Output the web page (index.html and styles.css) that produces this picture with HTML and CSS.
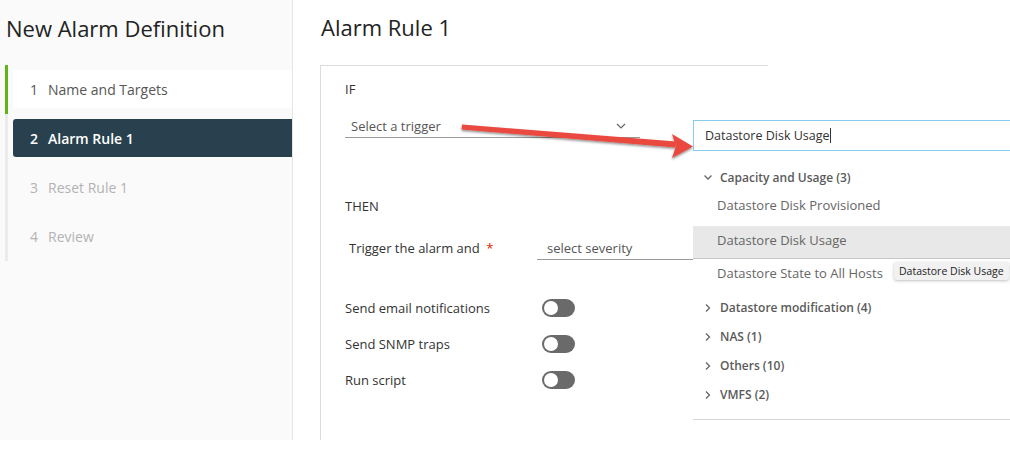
FILE: index.html
```html
<!DOCTYPE html>
<html lang="en">
<head>
    <meta charset="UTF-8">
    <title>New Alarm Definition</title>
    <link rel="stylesheet" href="styles.css">
</head>
<body>
    <div class="app">
        <div class="sidebar">
            <h1 class="wizard-title">New Alarm Definition</h1>
            <div class="steps">
                <div class="step-slot done">
                    <div class="step"><span class="num">1</span>Name and Targets</div>
                </div>
                <div class="step-slot">
                    <div class="step current"><span class="num">2</span>Alarm Rule 1</div>
                </div>
                <div class="step-slot">
                    <div class="step disabled"><span class="num">3</span>Reset Rule 1</div>
                </div>
                <div class="step-slot">
                    <div class="step disabled"><span class="num">4</span>Review</div>
                </div>
            </div>
        </div>
        <div class="main">
            <h2 class="page-title">Alarm Rule 1</h2>
            <div class="card">
                <div class="section-label">IF</div>
                <div class="select trigger-select">
                    <span>Select a trigger</span>
                    <svg class="caret" width="10" height="6" viewBox="0 0 10 6"><path d="M1 1l4 4 4-4" fill="none" stroke="#666" stroke-width="1.2"/></svg>
                </div>

                <div class="section-label then">THEN</div>
                <div class="severity-row">
                    <div class="severity-label">Trigger the alarm and <span class="req">*</span></div>
                    <div class="select severity-select"><span>select severity</span></div>
                </div>

                <div class="toggles">
                    <div class="toggle-row">
                        <span class="toggle-label">Send email notifications</span>
                        <span class="toggle"><span class="knob"></span></span>
                    </div>
                    <div class="toggle-row">
                        <span class="toggle-label">Send SNMP traps</span>
                        <span class="toggle"><span class="knob"></span></span>
                    </div>
                    <div class="toggle-row">
                        <span class="toggle-label">Run script</span>
                        <span class="toggle"><span class="knob"></span></span>
                    </div>
                </div>

                <div class="trigger-menu">
                    <div class="search">Datastore Disk Usage<span class="cursor"></span></div>
                    <div class="group open">
                        <svg class="chev" width="10" height="10" viewBox="0 0 10 10"><path d="M1.5 3.5l3.5 3.5 3.5-3.5" fill="none" stroke="#666" stroke-width="1.3"/></svg>
                        Capacity and Usage (3)
                    </div>
                    <div class="item">Datastore Disk Provisioned</div>
                    <div class="item active">Datastore Disk Usage</div>
                    <div class="item">Datastore State to All Hosts</div>
                    <div class="groups">
                        <div class="group">
                            <svg class="chev" width="10" height="10" viewBox="0 0 10 10"><path d="M3 1.5l3.5 3.5-3.5 3.5" fill="none" stroke="#666" stroke-width="1.3"/></svg>
                            Datastore modification (4)
                        </div>
                        <div class="group">
                            <svg class="chev" width="10" height="10" viewBox="0 0 10 10"><path d="M3 1.5l3.5 3.5-3.5 3.5" fill="none" stroke="#666" stroke-width="1.3"/></svg>
                            NAS (1)
                        </div>
                        <div class="group">
                            <svg class="chev" width="10" height="10" viewBox="0 0 10 10"><path d="M3 1.5l3.5 3.5-3.5 3.5" fill="none" stroke="#666" stroke-width="1.3"/></svg>
                            Others (10)
                        </div>
                        <div class="group">
                            <svg class="chev" width="10" height="10" viewBox="0 0 10 10"><path d="M3 1.5l3.5 3.5-3.5 3.5" fill="none" stroke="#666" stroke-width="1.3"/></svg>
                            VMFS (2)
                        </div>
                    </div>
                    <div class="tooltip">Datastore Disk Usage</div>
                </div>
            </div>
        </div>
    </div>

    <!-- annotation arrow drawn over the screenshot -->
    <svg class="callout" width="1010" height="460" viewBox="0 0 1010 460">
        <defs>
            <filter id="shadow" x="-10%" y="-50%" width="120%" height="200%">
                <feDropShadow dx="0" dy="1.5" stdDeviation="1.2" flood-color="#000" flood-opacity="0.45"/>
            </filter>
        </defs>
        <g filter="url(#shadow)" fill="#ea4a3f">
            <path d="M462 124.5 L676 141.5 L675.5 147.5 L461.5 129.5 Z"/>
            <path d="M672 134 L693 146.5 L672 158 L676 146 Z"/>
        </g>
    </svg>
</body>
</html>
```

FILE: styles.css
```css
* {
    box-sizing: border-box;
}
body {
    margin: 0;
    background: #fff;
    color: #333;
    font-family: 'Open Sans', 'Lato', sans-serif;
    position: relative;
}
.app {
    display: flex;
    height: 440px;
    width: 1010px;
}

/* wizard steps */
.sidebar {
    width: 293px;
    flex: none;
    background: #fafafa;
    border-right: 1px solid #e6e6e6;
}
.wizard-title {
    margin: 0;
    padding: 16px 0 0 6px;
    font-size: 22px;
    line-height: 24px;
    font-weight: 400;
    color: #222;
}
.steps {
    margin: 25px 0 0 5px;
}
.step-slot {
    border-left: 3px solid #ebebeb;
    padding: 5px 0 6px 5px;
}
.step-slot.done {
    border-left-color: #60b515;
}
.step {
    height: 38px;
    display: flex;
    align-items: center;
    padding-left: 17px;
    font-size: 14px;
    color: #565656;
    background: #fff;
}
.step .num {
    width: 18px;
}
.step.current {
    background: #29414e;
    color: #fff;
    font-weight: 600;
    border-radius: 3px 0 0 3px;
}
.step.disabled {
    background: none;
    color: #b3b3b3;
}

/* rule form */
.main {
    flex: 1;
    padding-left: 27px;
}
.page-title {
    margin: 0;
    padding: 15px 0 0 1px;
    font-size: 22px;
    line-height: 24px;
    font-weight: 400;
    color: #222;
}
.card {
    position: relative;
    margin-top: 26px;
    width: 448px;
    height: 375px;
    border-top: 1px solid #dcdcdc;
    border-left: 1px solid #dcdcdc;
    padding: 13px 0 0 24px;
    font-size: 13px;
}
.section-label {
    line-height: 20px;
}
.section-label.then {
    margin-top: 58px;
}
.select {
    display: flex;
    align-items: center;
    height: 24px;
    border-bottom: 1px solid #9a9a9a;
    color: #565656;
}
.trigger-select {
    margin-top: 15px;
    width: 295px;
    padding: 0 14px 0 6px;
    justify-content: space-between;
}
.severity-row {
    display: flex;
    margin-top: 20px;
}
.severity-label {
    width: 192px;
    padding-left: 4px;
    line-height: 24px;
}
.req {
    color: #e12200;
    margin-left: 3px;
}
.severity-select {
    width: 200px;
    padding-left: 10px;
}
.toggles {
    margin-top: 36px;
    display: flex;
    flex-direction: column;
    gap: 12px;
}
.toggle-row {
    display: flex;
    align-items: center;
    height: 24px;
}
.toggle-label {
    width: 197px;
}
.toggle {
    width: 33px;
    height: 18px;
    border-radius: 9px;
    background: #6a6a6a;
    padding: 2px;
}
.knob {
    display: block;
    width: 14px;
    height: 14px;
    border-radius: 50%;
    background: #fff;
}

/* trigger search dropdown */
.trigger-menu {
    position: absolute;
    left: 372px;
    top: 54px;
    width: 318px;
    background: #fff;
    padding-bottom: 10px;
    border-bottom: 1px solid #d7d7d7;
    color: #666;
    font-size: 13px;
}
.search {
    height: 31px;
    border: 1px solid #86cdec;
    padding-left: 11px;
    display: flex;
    align-items: center;
    color: #333;
    font-size: 12.5px;
}
.cursor {
    display: inline-block;
    width: 1px;
    height: 15px;
    background: #333;
}
.group {
    display: flex;
    align-items: center;
    height: 29px;
    padding-left: 10px;
    font-size: 12px;
    font-weight: 600;
    color: #5a5a5a;
}
.group .chev {
    margin-right: 7px;
}
.group.open {
    margin-top: 14px;
    height: 24px;
}
.item {
    height: 32px;
    line-height: 32px;
    padding-left: 24px;
}
.item.active {
    margin-top: 5px;
    height: 33px;
    line-height: 16px;
    padding-top: 6px;
    background: #e8e8e8;
    border-bottom: 1px solid #c8c8c8;
}
.item.active + .item {
    height: 28px;
    line-height: 16px;
    padding-top: 6px;
}
.groups {
    margin-top: 6px;
}
.tooltip {
    position: absolute;
    left: 201px;
    top: 142px;
    padding: 2px 5px;
    white-space: nowrap;
    font-size: 10.5px;
    line-height: 14px;
    color: #222;
    background: #f1f1f1;
    border-radius: 3px;
    box-shadow: 0 1px 3px rgba(0, 0, 0, 0.25);
}

.callout {
    position: absolute;
    left: 0;
    top: 0;
    pointer-events: none;
}
```
